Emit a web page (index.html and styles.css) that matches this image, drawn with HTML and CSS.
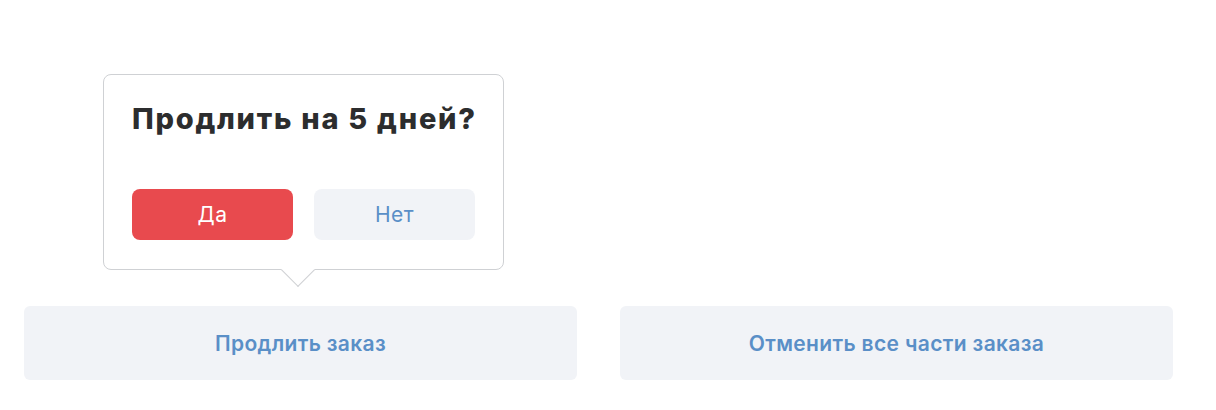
FILE: index.html
```html
<!DOCTYPE html>
<html lang="ru">
<head>
<meta charset="utf-8">
<link rel="stylesheet" href="styles.css">
</head>
<body>
<div class="actions">
  <div class="action-slot">
    <div class="popover">
      <div class="popover-title">Продлить на 5 дней?</div>
      <div class="popover-buttons">
        <button class="btn btn-yes">Да</button>
        <button class="btn btn-no">Нет</button>
      </div>
      <div class="popover-arrow"></div>
    </div>
    <button class="action">Продлить заказ</button>
  </div>
  <div class="action-slot">
    <button class="action">Отменить все части заказа</button>
  </div>
</div>
</body>
</html>
```
FILE: styles.css
```css
html, body {
  margin: 0;
  padding: 0;
  background: #ffffff;
  font-family: Inter, "Noto Sans", sans-serif;
}
.actions {
  display: grid;
  grid-template-columns: 553px 553px;
  column-gap: 43px;
  padding: 306px 0 0 24px;
}
.action-slot {
  position: relative;
}
.action {
  display: flex;
  align-items: center;
  justify-content: center;
  width: 100%;
  height: 74px;
  border: 0;
  border-radius: 6px;
  background: #f1f3f7;
  color: #5a8fc7;
  font-family: inherit;
  font-size: 21px;
  font-weight: 600;
  letter-spacing: 0.35px;
  padding: 0;
}
.popover {
  position: absolute;
  left: 79px;
  bottom: calc(100% + 36px);
  width: 401px;
  box-sizing: border-box;
  padding: 26px 28px 29px 28px;
  background: #fff;
  border: 1px solid #cfd1d4;
  border-radius: 8px;
}
.popover-title {
  text-align: center;
  font-size: 29px;
  font-weight: 800;
  letter-spacing: 1.75px;
  color: #2c2d2e;
  line-height: 36px;
  white-space: nowrap;
}
.popover-buttons {
  display: grid;
  grid-template-columns: 1fr 1fr;
  column-gap: 21px;
  margin-top: 52px;
}
.btn {
  height: 51px;
  border: 0;
  border-radius: 8px;
  font-family: inherit;
  font-size: 21px;
  font-weight: 400;
  letter-spacing: 0.5px;
  padding: 0;
}
.btn-yes {
  background: #e84a4e;
  color: #fff;
}
.btn-no {
  background: #f1f3f7;
  color: #5a8fc7;
}
.popover-arrow {
  position: absolute;
  left: 182px;
  bottom: -13px;
  width: 24px;
  height: 24px;
  box-sizing: border-box;
  background: #fff;
  border-right: 1px solid #cfd1d4;
  border-bottom: 1px solid #cfd1d4;
  transform: rotate(45deg);
}
```
